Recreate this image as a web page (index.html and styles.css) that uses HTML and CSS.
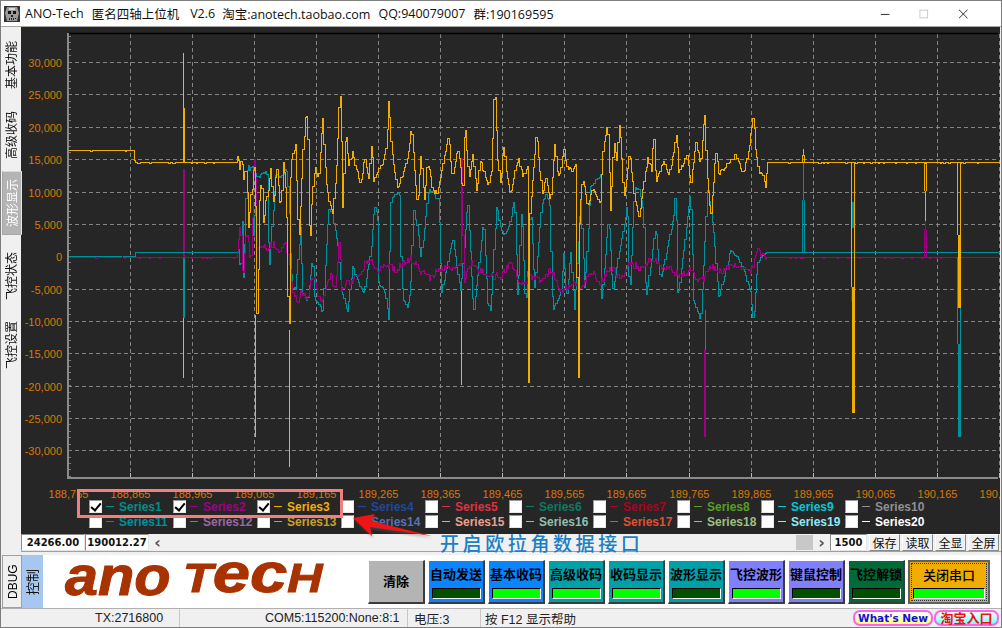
FILE: index.html
```html
<!DOCTYPE html>
<html lang="zh">
<head>
<meta charset="utf-8">
<title>ANO-Tech</title>
<link rel="stylesheet" href="styles.css">
</head>
<body>
<div class="window">
  <header class="titlebar">
    <svg class="app-icon" viewBox="0 0 16 16"><rect width="16" height="16" fill="#333"/><path d="M3 1h10l2 6-2 8H3L1 7z" fill="#9a9a9a"/><path d="M4 5h3v3H4zM9 5h3v3H9z" fill="#111"/><path d="M7 9h2v2H7zM5 12h1v2H5zM7 12h1v2H7zM9 12h1v2H9zM11 12h1v1h-1z" fill="#222"/><path d="M5 2h6v2H5z" fill="#d8d8d8"/></svg>
    <span class="title-seg">ANO-Tech</span>
    <span class="title-seg">匿名四轴上位机</span>
    <span class="title-seg wide">V2.6</span>
    <span class="title-seg">淘宝:anotech.taobao.com</span>
    <span class="title-seg">QQ:940079007</span>
    <span class="title-seg">群:190169595</span>
    <div class="win-controls">
      <svg viewBox="0 0 120 12" class="win-svg"><path d="M1 6.500h10" stroke="#111" fill="none"/><rect x="46.500" y="1.500" width="9" height="9" stroke="#c4c4c4" fill="none"/><path d="M92 1l10 10M102 1L92 11" stroke="#111" fill="none"/></svg>
    </div>
  </header>

  <div class="main">
    <nav class="tabs">
      <span class="tab t1">基本功能</span>
      <span class="tab t2">高级收码</span>
      <span class="tab active">波形显示</span>
      <span class="tab t4">飞控状态</span>
      <span class="tab t5">飞控设置</span>
    </nav>
    <div class="content">
      <section class="chart">
        <svg class="plot" id="plot" viewBox="21 27 979 473" width="979" height="473">
          <g id="grid"></g>
          <g id="traces" fill="none"></g>
          <g id="labels"></g>
        </svg>
        <div class="legend">
          <label class="item c1"><i class="box on"></i><b></b>Series1</label>
          <label class="item c2"><i class="box on"></i><b></b>Series2</label>
          <label class="item c3"><i class="box on"></i><b></b>Series3</label>
          <label class="item c4"><i class="box"></i><b></b>Series4</label>
          <label class="item c5"><i class="box"></i><b></b>Series5</label>
          <label class="item c6"><i class="box"></i><b></b>Series6</label>
          <label class="item c7"><i class="box"></i><b></b>Series7</label>
          <label class="item c8"><i class="box"></i><b></b>Series8</label>
          <label class="item c9"><i class="box"></i><b></b>Series9</label>
          <label class="item c10"><i class="box"></i><b></b>Series10</label>
          <label class="item c11"><i class="box"></i><b></b>Series11</label>
          <label class="item c12"><i class="box"></i><b></b>Series12</label>
          <label class="item c13"><i class="box"></i><b></b>Series13</label>
          <label class="item c14"><i class="box"></i><b></b>Series14</label>
          <label class="item c15"><i class="box"></i><b></b>Series15</label>
          <label class="item c16"><i class="box"></i><b></b>Series16</label>
          <label class="item c17"><i class="box"></i><b></b>Series17</label>
          <label class="item c18"><i class="box"></i><b></b>Series18</label>
          <label class="item c19"><i class="box"></i><b></b>Series19</label>
          <label class="item c20"><i class="box"></i><b></b>Series20</label>
        </div>
      </section>
      <div class="scrollrow">
        <span class="valbox">24266.00</span>
        <span class="valbox">190012.27</span>
        <span class="arrow">‹</span>
        <div class="track"><span class="thumb"></span></div>
        <span class="arrow">›</span>
        <span class="valbox num">1500</span>
        <button class="mini">保存</button>
        <button class="mini">读取</button>
        <button class="mini">全显</button>
        <button class="mini">全屏</button>
      </div>
    </div>
  </div>

  <div class="controls">
    <span class="vtab dbug">DBUG</span>
    <span class="vtab ctrl">控制</span>
    <div class="panel">
      <div class="logo"><span class="lw">ano</span><span class="lt"><span class="cap">T</span>ec<span class="cap">H</span></span></div>
      <div class="btns">
        <button class="cbtn grey"><span>清除</span></button>
        <button class="cbtn blue"><span>自动发送</span><i class="led off"></i></button>
        <button class="cbtn blue"><span>基本收码</span><i class="led"></i></button>
        <button class="cbtn teal"><span>高级收码</span><i class="led"></i></button>
        <button class="cbtn teal"><span>收码显示</span><i class="led"></i></button>
        <button class="cbtn teal"><span>波形显示</span><i class="led off"></i></button>
        <button class="cbtn violet"><span>飞控波形</span><i class="led"></i></button>
        <button class="cbtn violet"><span>键鼠控制</span><i class="led off"></i></button>
        <button class="cbtn green"><span>飞控解锁</span><i class="led off"></i></button>
        <button class="cbtn orange"><span>关闭串口</span><i class="led"></i></button>
      </div>
    </div>
  </div>

  <footer class="status">
    <span class="cell s1">TX:2716800</span>
    <span class="cell s2">COM5:115200:None:8:1</span>
    <span class="cell s3">电压:3</span>
    <span class="cell s4">按 F12 显示帮助</span>
    <span class="pill new">What's New</span>
    <span class="pill shop">淘宝入口</span>
  </footer>

  <div class="note-box"></div>
  <svg class="note-arrow" viewBox="345 508 95 36"><polygon points="353,518 375,514 371,521 432,536 370,527 372,536" fill="#f01414"/></svg>
  <div class="note-text">开启欧拉角数据接口</div>
</div>
<script src="chart.js"></script>
</body>
</html>
```
FILE: styles.css
```css
* { box-sizing: border-box; }
html, body { margin: 0; padding: 0; }
body { width: 1002px; height: 628px; overflow: hidden; background: #f0f0f0; font-family: "Open Sans", "Noto Sans CJK SC", sans-serif; }
.window { position: relative; width: 1002px; height: 628px; display: flex; flex-direction: column; border: 1px solid #7c7c7c; border-top-color: #808080; background: #f0f0f0; }

.titlebar { height: 26px; background: #fff; display: flex; align-items: center; padding-left: 3px; gap: 8px; font-size: 12.5px; color: #111; white-space: nowrap; border-bottom: 1px solid #a8a8a8; flex: none; }
.app-icon { width: 16px; height: 16px; margin-right: -3px; flex: none; }
.title-seg.wide { margin-left: 3px; margin-right: -1px; }
.win-controls { margin-left: auto; padding-right: 18px; display: flex; }
.win-svg { width: 103px; height: 12px; display: block; }

.main { display: flex; height: 525px; flex: none; }
.tabs { width: 20px; flex: none; display: flex; flex-direction: column; align-items: stretch; padding-top: 12px; font-size: 12px; color: #111; }
.tab { writing-mode: vertical-rl; text-orientation: sideways; transform: rotate(180deg); text-align: center; height: 52px; line-height: 20px; font-family: "Noto Sans CJK SC", sans-serif; }
.tab.t2 { margin-top: 18px; }
.tab.active { margin-top: 10px; height: 64px; width: 20px; margin-left: 1px; line-height: 17px; background: #b4b4b4; color: #fff; border: 1px solid #a8a8a8; border-bottom-color: #bfe4e4; border-left-color: #e6e6e6; }
.tab.t4 { margin-top: 15px; }
.tab.t5 { margin-top: 17px; }

.content { flex: 1; min-width: 0; display: flex; flex-direction: column; }
.chart { height: 507px; background: #262626; flex: none; overflow: hidden; margin-right: 1px; }
.plot { display: block; }
.axis { font-family: "Liberation Sans", sans-serif; font-size: 11px; fill: #d87808; }
.legend { display: grid; grid-template-columns: repeat(10, 84px); grid-auto-rows: 15px; padding-left: 68px; margin-top: -1px; font-family: "Liberation Sans", sans-serif; font-size: 12px; font-weight: 700; }
.item { display: flex; align-items: center; white-space: nowrap; height: 15px; }
.box { position: relative; width: 13px; height: 13px; background: #fff; border: 1px solid #9a9a9a; border-right-color: #e8e8e8; border-bottom-color: #e8e8e8; flex: none; }
.box.on::after { content: ""; position: absolute; left: 3px; top: 0; width: 4px; height: 8px; border: solid #000; border-width: 0 2px 2px 0; transform: rotate(40deg); }
.item b { display: block; width: 8px; height: 1.5px; margin: 0 5px 0 4px; background: currentColor; flex: none; }
.c1 { color: #009088; } .c2 { color: #a00088; } .c3 { color: #f0b000; } .c4 { color: #20489c; } .c5 { color: #e03040; }
.c6 { color: #0a7c60; } .c7 { color: #b00020; } .c8 { color: #58a020; } .c9 { color: #00c8d8; } .c10 { color: #909090; }
.c11 { color: #009098; } .c12 { color: #9868a0; } .c13 { color: #c8a030; } .c14 { color: #5870b8; } .c15 { color: #e8a090; }
.c16 { color: #90c0b0; } .c17 { color: #e05030; } .c18 { color: #a0c080; } .c19 { color: #90e8f8; } .c20 { color: #fff; }

.scrollrow { height: 18px; display: flex; align-items: center; flex: none; font-family: "DejaVu Sans", sans-serif; border-bottom: 1px solid #a0a0a0; }
.valbox { height: 17px; width: 64px; background: #fff; border: 1px solid #8c8c8c; border-right-color: #e4e4e4; border-bottom-color: #e4e4e4; font-size: 10px; font-weight: 700; color: #111; text-align: center; line-height: 15px; flex: none; }
.valbox.num { width: 37px; margin-right: 2px; }
.arrow { width: 17px; text-align: center; font-size: 16px; line-height: 15px; font-weight: 700; color: #555; flex: none; }
.track { flex: 1; height: 15px; display: flex; justify-content: flex-end; }
.thumb { width: 17px; height: 15px; background: #c8c8c8; }
.mini { width: 31px; height: 17px; padding: 0; margin: 0 2px 0 0; background: #f0f0f0; border: 1px solid #fff; border-right-color: #8a8a8a; border-bottom-color: #8a8a8a; font-family: "Noto Sans CJK SC", sans-serif; font-size: 12px; line-height: 15px; color: #111; }

.controls { height: 53px; display: flex; flex: none; margin-top: 3px; }
.vtab { writing-mode: vertical-rl; text-orientation: sideways; transform: rotate(180deg); width: 20px; text-align: center; font-size: 12px; line-height: 20px; flex: none; }
.dbug { font-family: "Liberation Sans", sans-serif; background: #f0f0f0; border: 1px solid #a0a0a0; margin-left: 1px; }
.ctrl { background: #a6c8f0; color: #111; font-family: "Noto Sans CJK SC", sans-serif; font-size: 13px; width: 21px; }
.panel { flex: 1; background: #fff; display: flex; align-items: center; padding-right: 11px; position: relative; min-width: 0; }
.logo { margin-left: 22px; width: 262px; height: 30px; color: #a83200; font-family: "Liberation Sans", sans-serif; font-weight: 700; font-style: italic; display: flex; align-items: center; flex: none; line-height: 30px; -webkit-text-stroke: 1px #a83200; }
.lw { font-size: 55px; display: inline-block; width: 118px; flex: none; transform: scaleX(1.08); transform-origin: left center; position: relative; top: -6px; }
.lt { font-size: 55px; display: inline-block; flex: none; white-space: nowrap; transform: scaleX(1.217); transform-origin: left center; position: relative; top: -6px; }
.cap { font-size: 40px; }
.btns { margin-left: auto; display: flex; gap: 3px; height: 44px; }
.cbtn { width: 57px; height: 44px; padding: 3px 0 0; border: 1px solid #fff; border-right: 2px solid #3c3c3c; border-bottom: 2px solid #3c3c3c; font-family: "Noto Sans CJK SC", sans-serif; font-weight: 700; font-size: 13px; line-height: 20px; color: #000; display: flex; flex-direction: column; align-items: center; flex: none; }
.grey { background: #b4b4b4; justify-content: center; padding-top: 0; }
.blue { background: #0a84ff; }
.teal { background: #00a0a8; }
.violet { background: #8080ff; }
.green { background: #006a38; }
.orange { background: #f0ac00; width: 82px; border: 2px solid #606060; font-weight: 500; outline: 1px dotted #333; outline-offset: -4px; }
.led { display: block; width: 49px; height: 11px; margin-top: 4px; background: #00ff00; border: 1px solid #000; border-right-color: #fff; border-bottom-color: #fff; flex: none; }
.led.off { background: #005000; }
.orange .led { width: 72px; margin-top: 3px; }

.status { height: 19px; display: flex; align-items: center; font-size: 12px; color: #222; font-family: "Liberation Sans", "Noto Sans CJK SC", sans-serif; flex: none; border-top: 1px solid #b0b0b0; }
.cell { height: 100%; display: flex; align-items: center; white-space: nowrap; border-right: 1px solid #c8c8c8; font-size: 12.500px; }
.s1 { width: 179px; padding-left: 94px; }
.s2 { width: 228px; padding-left: 85px; }
.s3 { width: 73px; padding-left: 6px; }
.s4 { width: 372px; padding-left: 4px; border-right: 0; }
.pill { height: 16px; border: 2px solid #ff60f0; border-radius: 7px; font-weight: 700; text-align: center; line-height: 12px; font-size: 12px; flex: none; white-space: nowrap; }
.new { width: 80px; color: #1010e0; background: linear-gradient(#fff, #ffff70); font-family: "DejaVu Sans", sans-serif; font-size: 10.500px; }
.shop { width: 65px; margin-left: 1px; color: #f01010; background: linear-gradient(#fff, #70ffff); font-family: "Noto Sans CJK SC", sans-serif; font-size: 13px; }

.note-box { position: absolute; left: 76px; top: 488px; width: 266px; height: 29px; border: 3px solid #f08080; pointer-events: none; }
.note-arrow { position: absolute; left: 344px; top: 507px; width: 95px; height: 36px; filter: drop-shadow(1px 2px 1px rgba(90,90,90,.5)); }
.note-text { position: absolute; left: 439px; top: 530px; font-family: "Noto Sans CJK SC", sans-serif; font-size: 19px; font-weight: 500; line-height: 24px; letter-spacing: 3.600px; color: #1a7fc4; white-space: nowrap; }
```
FILE: chart.js
```js
(function () {
  var NS = 'http://www.w3.org/2000/svg';
  var grid = document.getElementById('grid');
  var traces = document.getElementById('traces');
  var labels = document.getElementById('labels');

  function el(parent, name, attrs, text) {
    var e = document.createElementNS(NS, name);
    for (var k in attrs) e.setAttribute(k, attrs[k]);
    if (text) e.textContent = text;
    parent.appendChild(e);
    return e;
  }
  function line(parent, x1, y1, x2, y2, attrs) {
    attrs.x1 = x1; attrs.y1 = y1; attrs.x2 = x2; attrs.y2 = y2;
    return el(parent, 'line', attrs);
  }
  function fmt(n) { return n.toString().replace(/\B(?=(\d{3})+$)/g, ','); }

  var TOP = 33.5, BOTTOM = 478, LEFT = 68, RIGHT = 998;
  var dash = { stroke: '#858585', 'stroke-dasharray': '4 3', 'stroke-width': 1, 'shape-rendering': 'crispEdges' };
  var tick = { stroke: '#7c7c7c', 'shape-rendering': 'crispEdges' };

  for (var v = 30000; v >= -30000; v -= 5000) {
    var y = Math.round(256.2 - v * 32.35 / 5000) + 0.5;
    if (v !== 0) line(grid, LEFT, y, RIGHT, y, Object.assign({}, dash));
    el(labels, 'text', { x: 62, y: y + 4, 'text-anchor': 'end', class: 'axis' }, (v < 0 ? '-' : '') + fmt(Math.abs(v)));
  }
  /* minor ticks along the value axis */
  for (var my = 36; my < 478; my += 6.47) {
    var myy = Math.round(my) + 0.5;
    line(grid, 69, myy, 71, myy, Object.assign({}, tick));
  }

  /* vertical grid + time labels */
  for (var i = 0; i <= 15; i++) {
    var x = Math.round(68 + i * 62.05) + 0.5;
    if (i > 0) line(grid, x, TOP, x, BOTTOM, Object.assign({}, dash));
    line(grid, x, BOTTOM - 5, x, BOTTOM, { stroke: '#bbb', 'shape-rendering': 'crispEdges' });
    if (x < 1000) el(labels, 'text', { x: x, y: 498, 'text-anchor': 'middle', class: 'axis' }, fmt(188765 + i * 100));
  }
  line(grid, LEFT, TOP, RIGHT, TOP, { stroke: '#000', 'stroke-width': 1.5 });
  line(grid, LEFT, 33, LEFT, 479, { stroke: '#8a8a8a', 'stroke-width': 2 });
  line(grid, LEFT, BOTTOM, RIGHT, BOTTOM, { stroke: '#8a8a8a', 'stroke-width': 2 });

  /* seeded noise so the picture is stable */
  var seed = 20240;
  function rnd() { seed = (seed * 16807) % 2147483647; return seed / 2147483647 - 0.5; }

  function trace(points, color, noise, width) {
    var d = '', j = 0, step = 1.24;
    for (var px = points[0][0]; px <= points[points.length - 1][0]; px += step) {
      while (j < points.length - 2 && px > points[j + 1][0]) j++;
      var a = points[j], b = points[j + 1];
      var t = (px - a[0]) / (b[0] - a[0]);
      var busy = px > 236 && px < 766;
      var n = busy ? rnd() * noise : (rnd() > 0.4 ? 0.9 : 0);
      var yy = a[1] + (b[1] - a[1]) * Math.min(1, t) + n;
      var rx = Math.round(px) + 0.5, ry = Math.round(yy) + 0.5;
      d += d ? 'H' + rx + 'V' + ry : 'M' + rx + ' ' + ry;
    }
    el(traces, 'path', { d: d, stroke: color, 'stroke-width': width, 'shape-rendering': 'crispEdges', 'stroke-linejoin': 'miter' });
  }

  var ORANGE = '#f2ae00', TEAL = '#00929c', MAG = '#a00082', GREY = '#b4b4b4';

  var teal = [[68,256],[134,256],[135,251.5],[236,251.5],[238,250],[240,275],[242,207],[243,290],[245,205],[247,162],[249,170],[251,165],[252,170],[253,255],[255,172],[258,178],[262,172],[265,172],[267,175],[268,277],[272,217],[275,175],[280,177],[286,167],[288,192],[290,255],[292,287],[295,290],[300,225],[302,292],[307,300],[312,253],[313,297],[318,302],[322,313],[328,208],[332,213],[337,245],[340,285],[347,312],[352,265],[358,283],[363,293],[370,252],[374,204],[377,220],[378,282],[385,293],[388,320],[390,203],[393,195],[399,192],[400,247],[402,298],[407,307],[410,287],[413,202],[418,237],[420,257],[423,237],[428,188],[438,200],[441,293],[452,237],[460,292],[467,200],[473,313],[483,220],[487,302],[490,310],[496,203],[500,230],[505,235],[510,218],[514,197],[517,300],[521,205],[525,310],[530,205],[534,290],[541,205],[545,195],[549,200],[552,310],[560,295],[563,250],[566,300],[570,250],[574,310],[580,195],[584,290],[590,185],[600,175],[601,300],[608,217],[612,290],[627,203],[629,300],[634,187],[638,188],[643,210],[645,300],[655,227],[660,280],[673,217],[675,188],[677,300],[690,190],[693,300],[700,320],[707,183],[713,233],[718,300],[730,250],[740,262],[750,290],[753,322],[757,262],[765,251.5],[1000,251.5]];

  var magenta = [[68,257],[236,257],[238,240],[240,222],[242,282],[245,240],[247,232],[250,265],[253,170],[255,152],[256,250],[262,246],[266,248],[272,244],[278,250],[285,243],[289,262],[292,290],[295,295],[297,302],[300,288],[303,296],[307,300],[310,280],[313,276],[318,298],[322,300],[325,285],[330,272],[334,290],[338,255],[339,211],[340,290],[345,283],[352,280],[360,272],[365,262],[370,258],[377,270],[385,264],[395,270],[403,262],[410,258],[420,270],[430,278],[437,270],[445,266],[455,268],[460,262],[461,152],[463,280],[470,262],[480,270],[490,275],[500,276],[510,262],[520,285],[530,276],[540,280],[550,270],[560,290],[570,284],[580,285],[590,272],[600,282],[610,268],[620,278],[630,262],[640,268],[650,258],[660,265],[670,268],[680,276],[690,270],[700,282],[710,266],[720,272],[730,264],[740,266],[750,272],[757,250],[766,257],[1000,257]];

  var orange = [[68,150],[133,150],[134,162],[236,162],[237,153],[239,168],[241,158],[243,180],[245,165],[247,200],[248,232],[250,196],[252,185],[253,165],[255,172],[256,315],[257,310],[259,198],[261,178],[263,230],[265,200],[268,188],[270,168],[273,208],[276,165],[279,205],[281,197],[283,150],[284,178],[286,200],[288,330],[289,322],[290,170],[292,155],[295,145],[297,203],[298,245],[300,205],[302,155],[305,116],[307,116],[309,253],[311,205],[314,165],[318,180],[322,116],[325,175],[328,200],[332,213],[335,180],[338,120],[339,77],[341,150],[342,208],[345,128],[348,165],[352,153],[356,170],[360,183],[364,158],[368,178],[371,143],[373,183],[378,168],[382,163],[386,145],[388,98],[391,150],[394,172],[397,190],[400,180],[404,168],[408,150],[411,126],[414,170],[417,207],[420,153],[424,202],[426,170],[428,163],[432,190],[437,192],[441,170],[445,150],[448,137],[451,172],[453,172],[457,148],[460,170],[462,195],[464,120],[468,178],[472,153],[476,190],[480,160],[484,175],[488,185],[491,170],[494,80],[497,160],[500,185],[503,143],[506,172],[510,195],[514,172],[518,158],[522,178],[527,165],[528,390],[529,215],[532,177],[536,132],[539,170],[542,195],[545,178],[550,200],[554,143],[557,175],[560,170],[563,145],[567,168],[572,170],[576,162],[577,455],[579,210],[582,175],[587,205],[592,187],[596,195],[600,203],[602,153],[607,122],[610,213],[613,140],[616,160],[619,120],[623,197],[626,180],[629,152],[633,190],[638,218],[642,190],[647,157],[651,170],[653,130],[655,183],[659,172],[663,160],[668,175],[672,157],[676,132],[678,170],[682,165],[687,153],[690,185],[695,142],[700,163],[704,110],[706,170],[710,217],[715,152],[718,173],[723,170],[730,160],[735,155],[740,168],[743,173],[748,148],[753,115],[755,150],[758,172],[762,175],[765,187],[767,162],[1000,162]];

  /* isolated spikes: x, from y, to y, colour, width */
  var spikes = [
    [183,53,108,GREY,1],[183,318,378,GREY,1],[183.5,169,258,MAG,2],[183.5,258,318,TEAL,2],
    [255,315,437,GREY,1],[289,330,467,GREY,1],[461,280,385,GREY,1],
    [705,310,350,TEAL,1],[705,350,437,MAG,2],
    [803.5,162,200,TEAL,1],[802.5,200,252,TEAL,1],[804.5,200,252,TEAL,1]
  ];
  var orangeSpikes = [
    [183.5,108,162,ORANGE,2],[802.5,155,162,ORANGE,1],[804.5,155,162,ORANGE,1],[803.5,149,156,ORANGE,1],
    [853,202,228,TEAL,3],[851.5,162,287,ORANGE,1],[854.5,162,287,ORANGE,1],
    [851.5,287,301,MAG,1],[854.5,287,301,MAG,1],[853,287,413,ORANGE,3],
    [924.5,162,191,ORANGE,1],[926.5,162,191,ORANGE,1],[925.5,191,221,ORANGE,1],[925.5,221,230,MAG,1],[924.5,230,257,MAG,1],[926.5,230,257,MAG,1],
    [957.5,162,235,ORANGE,1],[960.5,162,235,ORANGE,1],
    [957.5,257,344,TEAL,1],[960.5,257,344,TEAL,1],[959,235,308,ORANGE,3],[959,344,437,TEAL,3]
  ];
  function drawSpikes(list) {
    list.forEach(function (s) {
      line(traces, s[0], s[1], s[0], s[2], { stroke: s[3], 'stroke-width': s[4], 'shape-rendering': 'crispEdges' });
    });
  }

  drawSpikes(spikes);
  trace(teal, TEAL, 3, 1.5);
  trace(magenta, MAG, 7, 1.5);
  trace(orange, ORANGE, 4, 1.5);
  drawSpikes(orangeSpikes);
})();
```
